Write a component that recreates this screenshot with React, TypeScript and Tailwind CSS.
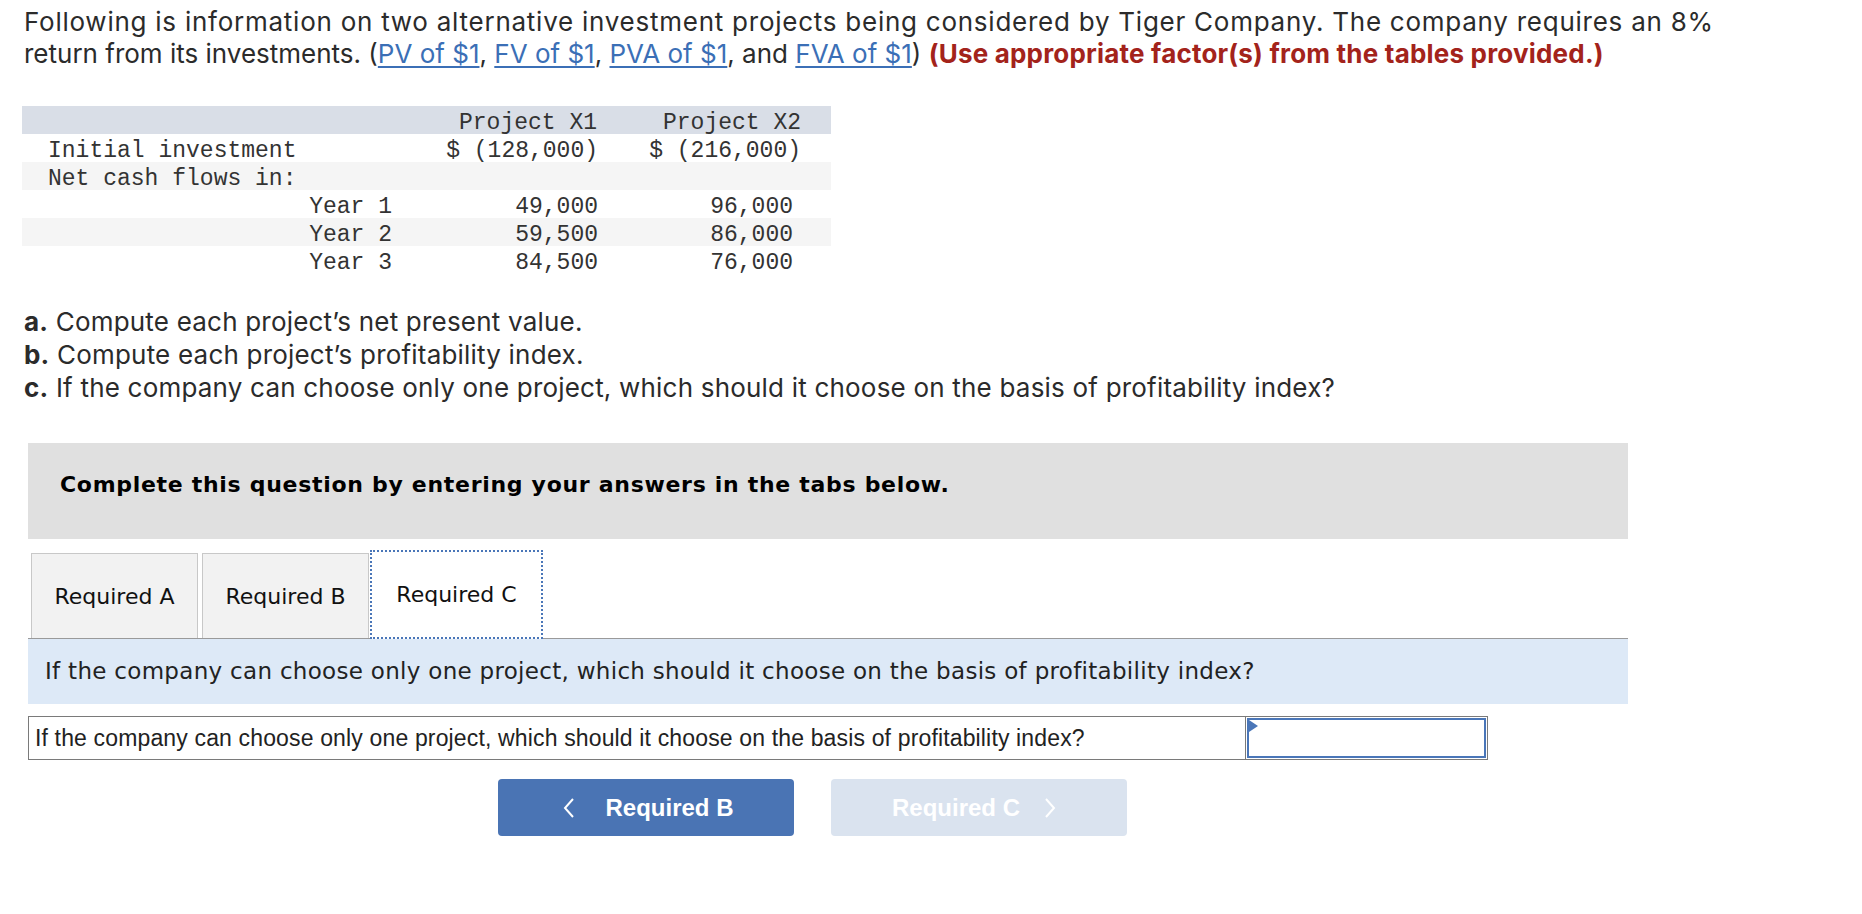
import React from 'react';

const rows = [
  { label: 'Initial investment', x1: '$ (128,000)', x2: '$ (216,000)', shade: false, indent: false },
  { label: 'Net cash flows in:', x1: '', x2: '', shade: true, indent: false },
  { label: 'Year 1', x1: '49,000', x2: '96,000', shade: false, indent: true },
  { label: 'Year 2', x1: '59,500', x2: '86,000', shade: true, indent: true },
  { label: 'Year 3', x1: '84,500', x2: '76,000', shade: false, indent: true },
];

function Link({ children }: { children: React.ReactNode }) {
  return <span className="text-[#3b6fb6] underline underline-offset-[3px]">{children}</span>;
}

function CashTable() {
  return (
    <div className="mt-[36px] ml-[22px] w-[809px] font-['Liberation_Mono',monospace] text-[23px] text-[#333]">
      <div className="grid grid-cols-[370px_206px_203px_30px] h-[28px] pt-[3px] leading-[28px] bg-[#d9dee7]">
        <div />
        <div className="text-right pr-[1px]">Project X1</div>
        <div className="text-right">Project X2</div>
        <div />
      </div>
      {rows.map((r) => (
        <div
          key={r.label}
          className={`grid grid-cols-[370px_206px_203px_30px] h-[28px] pt-[3px] leading-[28px] ${
            r.shade ? 'bg-[#f5f5f5]' : ''
          }`}
        >
          <div className={r.indent ? 'text-right' : 'pl-[26px] whitespace-nowrap'}>{r.label}</div>
          <div className="text-right">{r.x1}</div>
          <div className={r.indent ? 'text-right pr-[8px]' : 'text-right'}>{r.x2}</div>
          <div />
        </div>
      ))}
    </div>
  );
}

function Chevron({ dir }: { dir: 'left' | 'right' }) {
  return (
    <svg width="12" height="20" viewBox="0 0 12 20" fill="none">
      <polyline
        points={dir === 'left' ? '10,1 2,10 10,19' : '2,1 10,10 2,19'}
        stroke="white"
        strokeWidth="2"
        strokeLinejoin="miter"
      />
    </svg>
  );
}

export default function App() {
  const q = 'If the company can choose only one project, which should it choose on the basis of profitability index?';
  return (
    <div className="w-[1862px] h-[914px] bg-white overflow-hidden text-[#2b2b2b]">
      <div className="pl-[24px] pt-[6px] font-['Inter',sans-serif] text-[26px] leading-[32px] whitespace-nowrap">
        <div className="tracking-[0.75px]">
          Following is information on two alternative investment projects being considered by Tiger Company. The
          company requires an 8%
        </div>
        <div>
          return from its investments. (<Link>PV of $1</Link>, <Link>FV of $1</Link>, <Link>PVA of $1</Link>, and{' '}
          <Link>FVA of $1</Link>){' '}
          <span className="font-bold tracking-[0.2px] text-[#a3231b]">
            (Use appropriate factor(s) from the tables provided.)
          </span>
        </div>
      </div>

      <CashTable />

      <div className="mt-[31px] pl-[24px] font-['Inter',sans-serif] text-[26px] leading-[33px] tracking-[0.2px]">
        <div>
          <b>a.</b> Compute each project’s net present value.
        </div>
        <div>
          <b>b.</b> Compute each project’s profitability index.
        </div>
        <div>
          <b>c.</b> {q}
        </div>
      </div>

      <div className="mt-[39px] ml-[28px] w-[1600px] h-[96px] bg-[#e0e0e0] flex items-center pl-[32px] pb-[14px] font-['DejaVu_Sans',sans-serif] text-[22px] tracking-[0.7px] font-bold text-black">
        Complete this question by entering your answers in the tabs below.
      </div>

      <div className="mt-[12px] ml-[28px] w-[1600px] h-[88px] flex items-end border-b border-[#9a9a9a] font-['DejaVu_Sans',sans-serif] text-[22px] text-[#111]">
        <div className="ml-[3px] w-[167px] h-[85px] bg-[#f2f2f2] border border-b-0 border-[#c8c8c8] flex items-center justify-center">
          Required A
        </div>
        <div className="ml-[4px] w-[167px] h-[85px] bg-[#f2f2f2] border border-b-0 border-[#c8c8c8] flex items-center justify-center">
          Required B
        </div>
        <div className="ml-[1px] w-[173px] h-[89px] -mb-[1px] bg-white border-2 border-dotted border-[#4a76b8] flex items-center justify-center">
          Required C
        </div>
      </div>

      <div className="ml-[28px] w-[1600px] h-[65px] bg-[#dde9f7] flex items-center pl-[17px] font-['DejaVu_Sans',sans-serif] text-[23px] tracking-[0.3px] text-[#222]">
        {q}
      </div>

      <div className="mt-[12px] ml-[28px] w-[1460px] h-[44px] border border-[#7a7a7a] flex font-['Liberation_Sans',Arial,sans-serif] text-[23px] tracking-[0.15px] text-[#222]">
        <div className="flex-1 flex items-center pl-[6px] whitespace-nowrap">{q}</div>
        <div className="w-[242px] border-l border-[#7a7a7a] p-[1px]">
          <div className="relative h-full border-2 border-[#4a76b8] bg-white">
            <div className="absolute top-0 left-0 w-0 h-0 border-y-[6px] border-y-transparent border-l-[9px] border-l-[#4a76b8]" />
          </div>
        </div>
      </div>

      <div className="mt-[19px] ml-[498px] flex gap-[37px] font-['Liberation_Sans',Arial,sans-serif] text-[24px] font-bold text-white">
        <div className="w-[296px] h-[57px] rounded-[4px] bg-[#4a74b4] flex items-center justify-center gap-[30px] pl-[5px]">
          <Chevron dir="left" />
          <span>Required B</span>
        </div>
        <div className="w-[296px] h-[57px] rounded-[4px] bg-[#dae3ef] flex items-center justify-center gap-[24px] pr-[10px]">
          <span>Required C</span>
          <Chevron dir="right" />
        </div>
      </div>
    </div>
  );
}
